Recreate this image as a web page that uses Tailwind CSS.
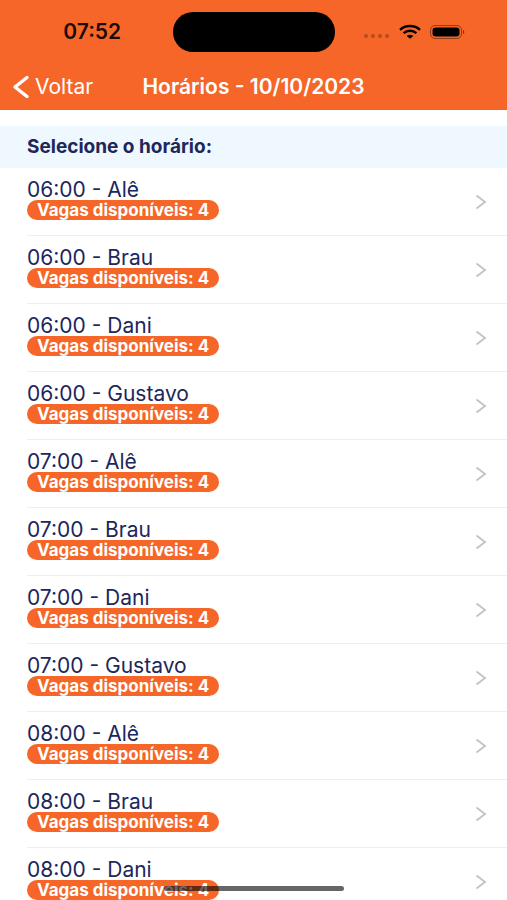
<!DOCTYPE html>
<html lang="pt-BR">

<head>
    <meta charset="UTF-8">
    <meta name="viewport" content="width=device-width, initial-scale=1.0">
    <title>Horários</title>
    <script src="https://cdn.jsdelivr.net/npm/@tailwindcss/browser@4"></script>
</head>

<body class="bg-white font-['Inter',sans-serif] text-[#20265a]">
    <div class="h-screen flex flex-col overflow-hidden">
        <header class="bg-[#f56628] shrink-0">
            <!-- Barra de status -->
            <div class="h-16 grid grid-cols-[1fr_162px_1fr] items-center">
                <span class="pl-3 text-center text-[21px] font-semibold text-black/90">07:52</span>
                <div class="h-10 rounded-full bg-black"></div>
                <div class="flex items-center justify-end gap-2 pr-[42px]">
                    <svg class="w-7 h-5" viewBox="0 0 28 20" fill="#000" fill-opacity=".25">
                        <circle cx="3" cy="14" r="2" />
                        <circle cx="10" cy="14" r="2" />
                        <circle cx="17" cy="14" r="2" />
                        <circle cx="24" cy="14" r="2" />
                    </svg>
                    <svg class="w-[22px] h-4" viewBox="0 0 22 16" fill="none" stroke="#000" stroke-width="2.4">
                        <path d="M1 5.8C6.5.8 15.5.8 21 5.8" />
                        <path d="M4.6 9.2c3.7-3.3 9.1-3.3 12.8 0" />
                        <path d="M7.7 11.9c1.9-1.6 4.7-1.6 6.6 0L11 14.800z" fill="#000" stroke="none" />
                    </svg>
                    <svg class="w-9 h-4" viewBox="0 0 36 16">
                        <rect x="1.5" y="1.5" width="31" height="13" rx="4.5" fill="none" stroke="#000" stroke-opacity=".4" />
                        <rect x="3.5" y="3.5" width="27" height="9" rx="3" />
                        <path d="M34 6c1.8.6 1.8 3.4 0 4z" fill-opacity=".5" />
                    </svg>
                </div>
            </div>
            <!-- Navegação -->
            <nav class="h-[46px] grid grid-cols-[1fr_auto_1fr] items-center px-3 text-white">
                <a href="#" class="flex items-center gap-[3px] text-[21px]">
                    <svg class="w-5 h-6" viewBox="0 0 20 24" fill="none" stroke="#fff" stroke-width="3.5" stroke-linecap="round" stroke-linejoin="round">
                        <path d="M15 2.5L3 12l12 9.5" />
                    </svg>
                    Voltar
                </a>
                <h1 class="text-[21px] font-semibold">Horários - 10/10/2023</h1>
            </nav>
        </header>

        <main class="pt-4">
            <h2 class="h-[42px] flex items-center bg-[#eff8ff] pl-[27px] text-[19px] font-bold">Selecione o horário:</h2>
            <ul id="lista"></ul>
        </main>
    </div>

    <div class="fixed bottom-[9px] inset-x-0 mx-auto w-[180px] h-[5px] rounded-full bg-black/60"></div>

    <script>
        const horarios = [
            '06:00 - Alê', '06:00 - Brau', '06:00 - Dani', '06:00 - Gustavo',
            '07:00 - Alê', '07:00 - Brau', '07:00 - Dani', '07:00 - Gustavo',
            '08:00 - Alê', '08:00 - Brau', '08:00 - Dani'
        ];
        document.getElementById('lista').innerHTML = horarios.map(horario => `
            <li class="pl-[27px]">
                <a href="#" class="h-[68px] flex items-center justify-between border-b border-[#eeeeee] pr-5">
                    <div class="flex flex-col items-start pb-1">
                        <span class="text-[21px] leading-[21px]">${horario}</span>
                        <span class="h-5 rounded-full bg-[#f56628] px-[10px] text-[17px] leading-5 font-bold text-white">Vagas disponíveis: 4</span>
                    </div>
                    <svg class="w-3 h-4" viewBox="0 0 12 16" fill="none" stroke="#c4c4c7" stroke-width="2">
                        <path d="M1.5 1.5L10 8l-8.5 6.5" />
                    </svg>
                </a>
            </li>`).join('');
    </script>
</body>

</html>
